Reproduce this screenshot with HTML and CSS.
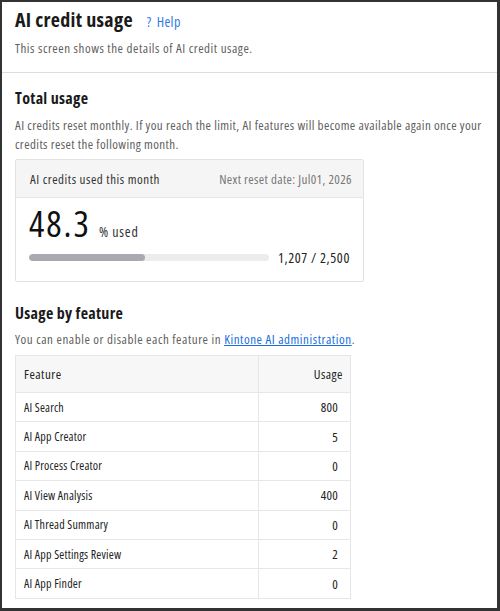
FILE: index.html
```html
<!DOCTYPE html>
<html lang="en">
<head>
    <meta charset="UTF-8">
    <meta name="viewport" content="width=device-width, initial-scale=1.0">
    <title>AI credit usage</title>
    <link rel="stylesheet" href="styles.css">
</head>
<body>
<div class="frame">

    <!-- Page header -->
    <div class="page-head">
        <div class="title-row">
            <h1>AI credit usage</h1>
            <a class="help" href="#"><span class="q">?</span> Help</a>
        </div>
        <p class="desc">This screen shows the details of AI credit usage.</p>
    </div>

    <!-- Total usage -->
    <div class="section">
        <h2>Total usage</h2>
        <p class="desc note">AI credits reset monthly. If you reach the limit, AI features will become available again once your credits reset the following month.</p>

        <div class="card">
            <div class="card-head">
                <span>AI credits used this month</span>
                <span class="reset">Next reset date: Jul01, 2026</span>
            </div>
            <div class="card-body">
                <div class="percent"><span class="big">48.3</span><span class="unit">% used</span></div>
                <div class="bar-row">
                    <div class="bar"><div class="bar-fill" style="width:48.3%"></div></div>
                    <span class="count">1,207 / 2,500</span>
                </div>
            </div>
        </div>
    </div>

    <!-- Usage by feature -->
    <div class="section">
        <h2 class="second">Usage by feature</h2>
        <p class="desc">You can enable or disable each feature in <a class="link" href="#">Kintone AI administration</a>.</p>

        <table class="usage">
            <thead>
                <tr><th>Feature</th><th class="num">Usage</th></tr>
            </thead>
            <tbody>
                <tr><td>AI Search</td><td class="num">800</td></tr>
                <tr><td>AI App Creator</td><td class="num">5</td></tr>
                <tr><td>AI Process Creator</td><td class="num">0</td></tr>
                <tr><td>AI View Analysis</td><td class="num">400</td></tr>
                <tr><td>AI Thread Summary</td><td class="num">0</td></tr>
                <tr><td>AI App Settings Review</td><td class="num">2</td></tr>
                <tr><td>AI App Finder</td><td class="num">0</td></tr>
            </tbody>
        </table>
    </div>

</div>
</body>
</html>
```

FILE: styles.css
```css
html, body {
    margin: 0;
    height: 100%;
}
body {
    font-family: "Open Sans", "Noto Sans", sans-serif;
    font-stretch: condensed;
    letter-spacing: 0.55px;
    color: #222;
    background: #fff;
}
.frame {
    box-sizing: border-box;
    height: 100vh;
    border: 2px solid #333;
    border-right-width: 3px;
    border-bottom-width: 3px;
    overflow: hidden;
}
.page-head {
    padding: 4px 0 14px 13px;
    border-bottom: 1px solid #ddd;
}
.title-row {
    display: flex;
    align-items: baseline;
    gap: 14px;
}
h1 {
    margin: 0;
    font-size: 20px;
    font-weight: 700;
    line-height: 28px;
    letter-spacing: 0.3px;
    color: #1a1a1a;
}
.help {
    color: #2f7be6;
    text-decoration: none;
    font-size: 14px;
    letter-spacing: 0.4px;
}
.help .q {
    margin-right: 2px;
}
.desc {
    margin: 0;
    font-size: 13px;
    line-height: 19px;
    color: #5f5f5f;
}
.desc.note {
    letter-spacing: 0.4px;
}
.page-head .desc {
    margin-top: 5px;
}
.section {
    padding: 0 3px 0 13px;
}
h2 {
    margin: 14px 0 7px;
    font-size: 16px;
    font-weight: 700;
    line-height: 22px;
    letter-spacing: 0.3px;
    color: #1a1a1a;
}
h2.second {
    margin-top: 20px;
    margin-bottom: 6px;
}
.card {
    width: 349px;
    box-sizing: border-box;
    margin-top: 5px;
    border: 1px solid #e2e2e2;
    border-radius: 2px;
}
.card-head {
    display: flex;
    justify-content: space-between;
    align-items: center;
    height: 37px;
    padding: 0 11px 0 14px;
    background: #f5f5f5;
    border-bottom: 1px solid #e6e6e6;
    font-size: 13px;
    color: #333;
}
.card-head .reset {
    color: #777;
    letter-spacing: 0.35px;
}
.card-body {
    padding: 4px 12px 14px 13px;
}
.percent {
    display: flex;
    align-items: baseline;
    gap: 8px;
}
.percent .big {
    font-size: 36px;
    line-height: 44px;
    font-weight: 400;
    letter-spacing: 2px;
    color: #111;
}
.percent .unit {
    font-size: 14px;
    letter-spacing: 0.8px;
    color: #333;
}
.bar-row {
    display: flex;
    align-items: center;
    gap: 9px;
    margin-top: 2px;
    line-height: 19px;
}
.bar {
    width: 240px;
    height: 7px;
    border-radius: 4px;
    background: #ececec;
    overflow: hidden;
}
.bar-fill {
    height: 100%;
    border-radius: 4px;
    background: #a9a9b2;
}
.count {
    font-size: 14px;
    letter-spacing: 0.6px;
    color: #222;
}
.link {
    color: #1a6fe0;
}
.usage {
    width: 336px;
    margin-top: 6px;
    border-collapse: collapse;
    border: 1px solid #e6e6e6;
    letter-spacing: 0.2px;
}
.usage th, .usage td {
    border: 1px solid #e6e6e6;
    text-align: left;
    padding: 0 8px;
}
.usage th {
    height: 36px;
    background: #f7f7f7;
    font-size: 13px;
    font-weight: 400;
    letter-spacing: 0.5px;
    color: #222;
}
.usage td {
    height: 28.4px;
    font-size: 12px;
    color: #222;
}
.usage th:first-child {
    width: 226px;
}
.usage .num {
    text-align: right;
    padding-right: 12px;
}
.usage th.num {
    padding-right: 7px;
}
.usage td.num {
    font-size: 13px;
}
```
